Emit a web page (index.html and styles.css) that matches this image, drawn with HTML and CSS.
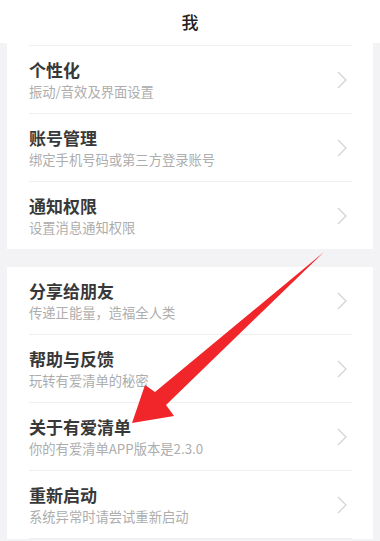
FILE: index.html
```html
<!DOCTYPE html>
<html lang="zh">
<head>
<meta charset="utf-8">
<link rel="stylesheet" href="styles.css">
</head>
<body>
<div class="page">
  <header class="header">我</header>
  <div class="content">
    <section class="card card-first">
      <div class="row"><div class="row-inner">
        <div class="texts"><div class="title">个性化</div><div class="sub">振动/音效及界面设置</div></div>
        <svg class="chev" viewBox="0 0 10 18"><path d="M1 1 L9 9 L1 17" /></svg>
      </div></div>
      <div class="row"><div class="row-inner">
        <div class="texts"><div class="title">账号管理</div><div class="sub">绑定手机号码或第三方登录账号</div></div>
        <svg class="chev" viewBox="0 0 10 18"><path d="M1 1 L9 9 L1 17" /></svg>
      </div></div>
      <div class="row"><div class="row-inner last">
        <div class="texts"><div class="title">通知权限</div><div class="sub">设置消息通知权限</div></div>
        <svg class="chev" viewBox="0 0 10 18"><path d="M1 1 L9 9 L1 17" /></svg>
      </div></div>
    </section>
    <section class="card card-second">
      <div class="row"><div class="row-inner">
        <div class="texts"><div class="title">分享给朋友</div><div class="sub">传递正能量，造福全人类</div></div>
        <svg class="chev" viewBox="0 0 10 18"><path d="M1 1 L9 9 L1 17" /></svg>
      </div></div>
      <div class="row"><div class="row-inner">
        <div class="texts"><div class="title">帮助与反馈</div><div class="sub">玩转有爱清单的秘密</div></div>
        <svg class="chev" viewBox="0 0 10 18"><path d="M1 1 L9 9 L1 17" /></svg>
      </div></div>
      <div class="row"><div class="row-inner">
        <div class="texts"><div class="title">关于有爱清单</div><div class="sub">你的有爱清单APP版本是2.3.0</div></div>
        <svg class="chev" viewBox="0 0 10 18"><path d="M1 1 L9 9 L1 17" /></svg>
      </div></div>
      <div class="row"><div class="row-inner">
        <div class="texts"><div class="title">重新启动</div><div class="sub">系统异常时请尝试重新启动</div></div>
        <svg class="chev" viewBox="0 0 10 18"><path d="M1 1 L9 9 L1 17" /></svg>
      </div></div>
    </section>
  </div>
  <svg class="arrow" viewBox="0 0 380 541" width="380" height="541">
    <polygon points="324,252 166,405 174,416 132,423 145,385 155,392" fill="#f0262a" />
  </svg>
</div>
</body>
</html>
```

FILE: styles.css
```css
html, body {
  margin: 0;
  padding: 0;
}
body {
  width: 380px;
  height: 541px;
  overflow: hidden;
  background: #f3f3f5;
  font-family: "Noto Sans CJK SC", "Noto Sans", sans-serif;
}
.page {
  position: relative;
  width: 380px;
  height: 541px;
  overflow: hidden;
}
.header {
  height: 43px;
  background: #ffffff;
  display: flex;
  align-items: center;
  justify-content: center;
  font-size: 17px;
  font-weight: 500;
  color: #222;
}
.content {
  display: flex;
  flex-direction: column;
  gap: 18px;
}
.card {
  margin: 0 7px;
  background: #ffffff;
}
.card-first {
  padding-top: 2px;
}
.card-first .row:first-child .row-inner {
  border-top: 1px solid #f0f0f0;
}
.row {
  padding: 0 21px 0 22px;
}
.row-inner {
  display: flex;
  align-items: center;
  justify-content: space-between;
  border-bottom: 1px solid #efefef;
  height: 67px;
}
.row-inner.last {
  border-bottom: 0;
}
.texts {
  display: flex;
  flex-direction: column;
  gap: 2px;
  padding-top: 2px;
}
.title {
  font-size: 17px;
  line-height: 20px;
  font-weight: 700;
  color: #383838;
}
.sub {
  font-size: 13.3px;
  line-height: 20px;
  color: #adadad;
}
.chev {
  width: 10px;
  height: 18px;
  margin-right: 5px;
  fill: none;
  stroke: #d2d2d2;
  stroke-width: 1.2;
}
.arrow {
  position: absolute;
  left: 0;
  top: 0;
}
```
